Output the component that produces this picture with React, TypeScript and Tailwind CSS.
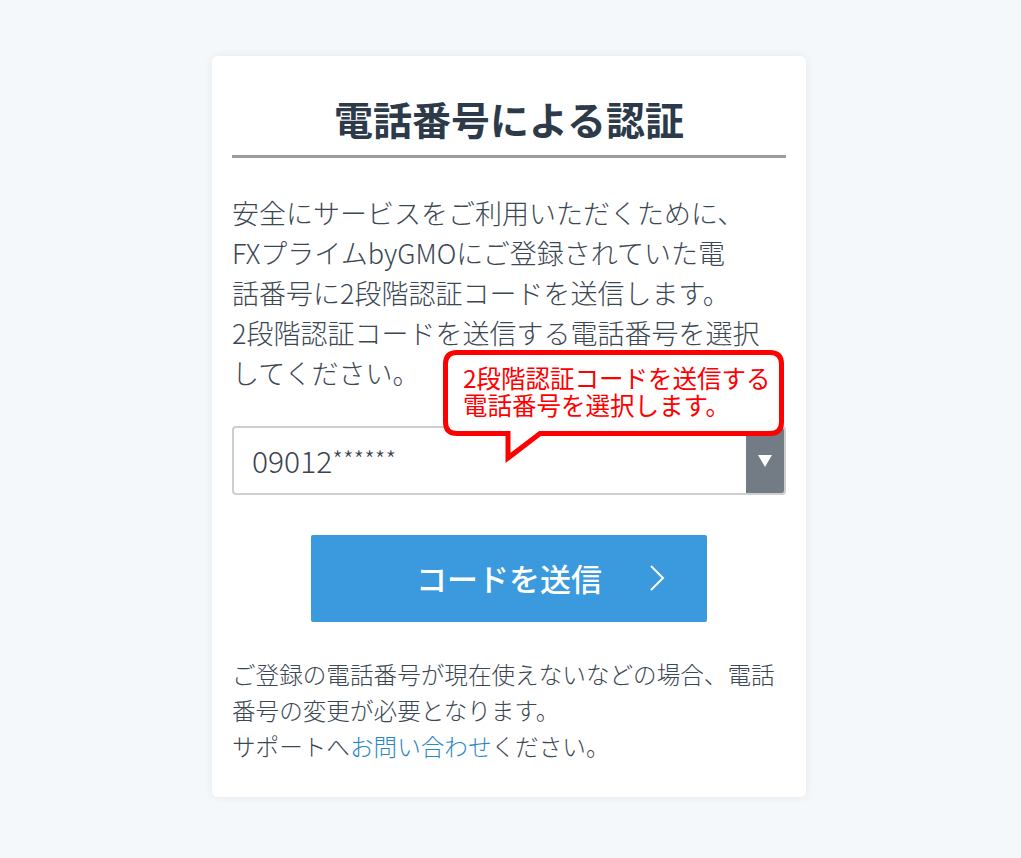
import React from "react";

const font = { fontFamily: '"Noto Sans CJK JP", "Noto Sans", sans-serif' };

const bodyLines = [
  "安全にサービスをご利用いただくために、",
  "FXプライムbyGMOにご登録されていた電",
  "話番号に2段階認証コードを送信します。",
  "2段階認証コードを送信する電話番号を選択",
  "してください。",
];

export default function App() {
  return (
    <div
      className="min-h-[858px] w-full bg-[#f5f8fb] pt-[56px]"
      style={font}
    >
      <div className="relative ml-[212px] w-[594px] rounded-md bg-white px-5 pt-[38px] pb-[33px] shadow-[0_0_10px_rgba(0,0,0,0.07)]">
        <h1 className="text-center text-[39px] font-bold leading-[48px] text-[#2c3a4a]">
          電話番号による認証
        </h1>
        <div className="mt-[13px] h-[3px] w-full bg-[#9c9c9c]" />

        <div className="mt-[35px] flex flex-col items-start text-[27px] font-light leading-[40px] text-[#3c4754] whitespace-nowrap">
          {bodyLines.map((l) => (
            <span key={l} className="block w-fit">
              {l}
            </span>
          ))}
        </div>

        <div className="mt-[33px] flex h-[69px] w-full overflow-hidden rounded-[4px] border-2 border-[#cfcfcf]">
          <div className="flex flex-1 items-center pl-[18px] text-[30px] font-light text-[#3a4350]">
            09012<span className="text-[24px] -translate-y-[2px]">******</span>
          </div>
          <div className="flex w-[38px] items-center justify-center bg-[#737b84]">
            <svg width="16" height="14" viewBox="0 0 16 14">
              <path d="M1 1 H15 L8 13 Z" fill="#ffffff" />
            </svg>
          </div>
        </div>

        <div className="mt-[40px] flex justify-center">
          <button className="relative flex h-[87px] w-[396px] items-center justify-center rounded-[2px] bg-[#3b9ade] text-[31px] font-medium text-white">
            コードを送信
            <svg
              className="absolute left-[338px] top-[29px]"
              width="16"
              height="28"
              viewBox="0 0 16 28"
            >
              <path
                d="M2 2 L14 14 L2 26"
                fill="none"
                stroke="#ffffff"
                strokeWidth="2"
              />
            </svg>
          </button>
        </div>

        <p className="mt-[34px] text-[23.6px] font-light leading-[36px] text-[#3c4754] whitespace-nowrap">
          ご登録の電話番号が現在使えないなどの場合、電話
          <br />
          番号の変更が必要となります。
          <br />
          サポートへ<span className="text-[#2a87c6]">お問い合わせ</span>ください。
        </p>

        {/* Callout overlay */}
        <div className="absolute left-[231px] top-[294px] h-[114px] w-[341px]">
          <svg
            className="absolute left-0 top-0"
            width="341"
            height="114"
            viewBox="0 0 341 114"
          >
            <path
              d="M14 2.5 H327 Q338.5 2.5 338.5 14 V72 Q338.5 83.5 327 83.5 H97 L65 108 V83.5 H14 Q2.5 83.5 2.5 72 V14 Q2.5 2.5 14 2.5 Z"
              fill="#ffffff"
              stroke="#ff0000"
              strokeWidth="5"
              strokeLinejoin="miter"
            />
          </svg>
          <div className="absolute left-[20px] top-[14px] text-[24.5px] leading-[27px] text-[#f00] whitespace-nowrap">
            2段階認証コードを送信する
            <br />
            電話番号を選択します。
          </div>
        </div>
      </div>
    </div>
  );
}
